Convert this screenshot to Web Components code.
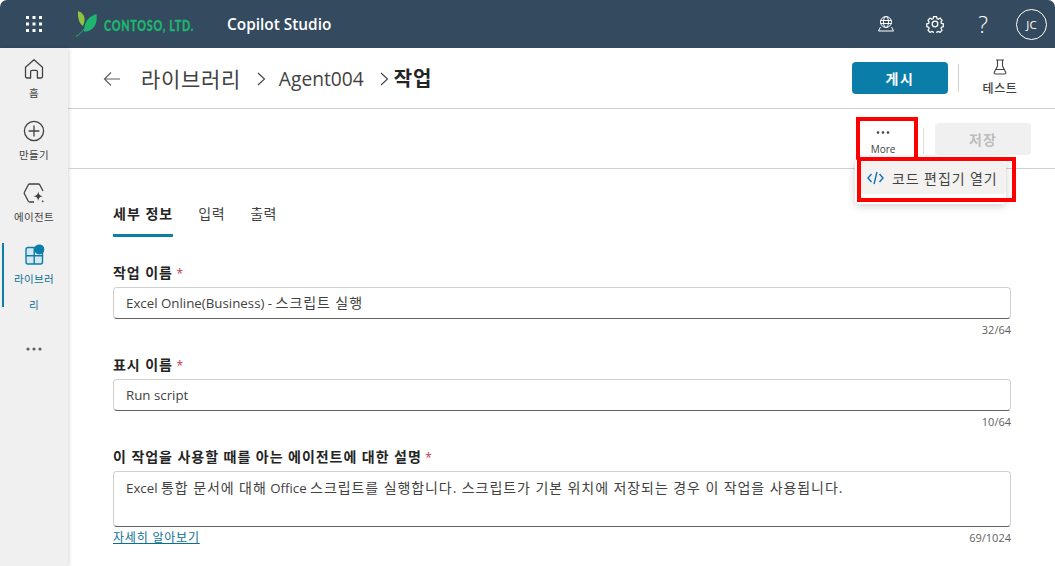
<!DOCTYPE html>
<html lang="ko">
<head>
<meta charset="utf-8">
<title>Copilot Studio</title>
<style>
  html, body { margin: 0; height: 100%; background: #fff; overflow: hidden; }
  body { font-family: "Open Sans", "Noto Sans CJK KR", sans-serif; color: #242424; }
  studio-shell { height: 566px; }
</style>
</head>
<body>
<studio-shell>
  <app-topbar slot="top"></app-topbar>
  <app-rail slot="rail">
    <rail-item icon="home" label="홈"></rail-item>
    <rail-item icon="plus" label="만들기"></rail-item>
    <rail-item icon="agent" label="에이전트"></rail-item>
    <rail-item icon="library" label="라이브러리" active></rail-item>
    <rail-item icon="more"></rail-item>
  </app-rail>
  <page-header slot="head"></page-header>
  <action-toolbar slot="head"></action-toolbar>
  <section-tabs></section-tabs>
  <form-field label="작업 이름" value="Excel Online(Business) - 스크립트 실행" count="32/64"></form-field>
  <form-field label="표시 이름" value="Run script" count="10/64"></form-field>
  <form-field label="이 작업을 사용할 때를 아는 에이전트에 대한 설명" value="Excel 통합 문서에 대해 Office 스크립트를 실행합니다. 스크립트가 기본 위치에 저장되는 경우 이 작업을 사용됩니다." count="69/1024" link="자세히 알아보기" tall></form-field>
</studio-shell>

<script>
const ICONS = {
  home: `<svg width="22" height="22" viewBox="0 0 22 22" fill="none" stroke="#424242" stroke-width="1.3"><path d="M2.500 9.200 11 1.800l8.500 7.400v9.400a1.400 1.400 0 0 1-1.400 1.400h-3.700v-6.200a1.400 1.400 0 0 0-1.400-1.400H9a1.400 1.400 0 0 0-1.400 1.400v6.200H3.900a1.400 1.400 0 0 1-1.400-1.400z" stroke-linejoin="round"/></svg>`,
  plus: `<svg width="22" height="22" viewBox="0 0 22 22" fill="none" stroke="#424242" stroke-width="1.3"><circle cx="11" cy="11" r="9.600"/><path d="M11 5.600v10.800M5.600 11h10.800"/></svg>`,
  agent: `<svg width="22" height="22" viewBox="0 0 22 22" fill="none"><path d="M11 20H6.700a1.600 1.600 0 0 1-1.400-.8L1.400 11.800a1.600 1.600 0 0 1 0-1.600L5.300 2.800A1.600 1.600 0 0 1 6.700 2h8.600a1.600 1.600 0 0 1 1.400.8L20 9" stroke="#424242" stroke-width="1.300"/><path d="M15.300 9.500c.5 3.200 1.500 4.200 4.700 4.800-3.200.5-4.200 1.500-4.700 4.700-.6-3.200-1.600-4.200-4.800-4.700 3.200-.6 4.200-1.600 4.800-4.800zM19.700 17.800c.2 1 .5 1.300 1.500 1.500-1 .2-1.300.5-1.500 1.500-.2-1-.5-1.300-1.500-1.500 1-.2 1.300-.5 1.500-1.500z" fill="#424242"/></svg>`,
  library: `<svg width="22" height="22" viewBox="0 0 22 22" fill="none"><rect x="3" y="3.500" width="16.500" height="16.500" rx="2" fill="#d5e8f1" stroke="#0a7ea8" stroke-width="1.400"/><path d="M11.200 3.500V20M3 11.700h16.500" stroke="#0a7ea8" stroke-width="1.400"/><circle cx="16.300" cy="5.400" r="5" fill="#0a7ea8"/></svg>`
};

// Hangul runs get their own span, the Latin around them stays at the base size
const hangul = text => text.replace(/[\uAC00-\uD7A3]+(?:[ .]+[\uAC00-\uD7A3]+)*\.?/g, m => `<span class="ko">${m}</span>`);

class StudioShell extends HTMLElement {
  constructor() {
    super();
    this.attachShadow({ mode: "open" });
    this.shadowRoot.innerHTML = `
      <style>
        :host { display: grid; grid-template: 48px 1fr / 68px 1fr; }
        .top { grid-column: 1 / 3; }
        main { display: flex; flex-direction: column; min-width: 0; overflow: hidden; }
        .body { display: flex; flex-direction: column; padding: 32px 44px 0 45px; }
      </style>
      <div class="top"><slot name="top"></slot></div>
      <slot name="rail"></slot>
      <main>
        <slot name="head"></slot>
        <div class="body"><slot></slot></div>
      </main>`;
  }
}

class AppTopbar extends HTMLElement {
  constructor() {
    super();
    this.attachShadow({ mode: "open" });
    const dots = [0, 1, 2].flatMap(r => [0, 1, 2].map(c =>
      `<rect x="${c * 6.5}" y="${r * 6.5}" width="3" height="3" fill="#fff"/>`)).join("");
    this.shadowRoot.innerHTML = `
      <style>
        :host { display: flex; align-items: center; height: 48px; background: #344a5e; color: #fff; border-radius: 7px 7px 0 0; }
        .waffle { display: flex; margin-left: 26px; width: 50px; }
        .logo { display: flex; align-items: center; gap: 6px; width: 151px; }
        .brand { font: 900 15px "Lato", sans-serif; color: #1fb56f; letter-spacing: 1px; -webkit-text-stroke: .3px #1fb56f; transform: scaleX(.72); transform-origin: left; white-space: nowrap; width: 91px; margin-top: 1px; }
        .name { font: 600 15.400px "Open Sans", sans-serif; }
        .tools { margin-left: auto; display: flex; align-items: center; }
        .tools svg { display: block; margin-top: -1px; }
        .tool { width: 50px; display: flex; justify-content: center; }
        .gear { padding-right: 2px; box-sizing: border-box; }
        .help { font: 300 23px "Open Sans", sans-serif; line-height: 24px; margin-left: -3px; margin-right: 1px; }
        .avatar { width: 29px; height: 29px; margin: 0 8px 0 7px; border: 1px solid #fff; border-radius: 50%; display: grid; place-items: center; font-size: 11.500px; }
      </style>
      <div class="waffle"><svg width="16" height="16">${dots}</svg></div>
      <div class="logo">
        <svg width="22" height="26" viewBox="0 0 22 26">
          <path d="M0 25.500C3 24 6 21 8 18" stroke="#1fb56f" stroke-width="1" fill="none"/>
          <path d="M2 0c4 1.500 6 4 6.500 7 .3 2.500-.3 5-1.500 8C3.500 12.500 1.500 8 2 0z" fill="#8cc63f"/>
          <path d="M20.500 3c.8 6.500-.5 11-4 14.500-2.500 2.500-5.500 3-8.500 3 0-6 1.500-10 4.500-13 2-2 5-3.500 8-4.500z" fill="#1fb56f"/>
        </svg>
        <span class="brand">CONTOSO, LTD.</span>
      </div>
      <span class="name">Copilot Studio</span>
      <div class="tools">
        <div class="tool"><svg width="18" height="18" viewBox="0 0 18 18" fill="none" stroke="#fff" stroke-width="1"><circle cx="9" cy="7" r="5.500"/><ellipse cx="9" cy="7" rx="2.500" ry="5.500"/><path d="M3.500 5.500h11M3.500 8.500h11M3.500 12 1.500 16h15L14.500 12"/></svg></div>
        <div class="tool gear"><svg width="18" height="18" viewBox="0 0 18 18" fill="none" stroke="#fff" stroke-width="1.300"><circle cx="9" cy="9" r="2.800"/><path d="M7.400 1.300h3.200l.4 2.200 1.300.6 2-1.100 2.100 2.300-1.200 1.800.5 1.400 2 .5v3l-2 .5-.5 1.400 1.200 1.800-2.100 2.300-2-1.100-1.300.6-.4 2.200H7.400l-.4-2.200-1.300-.6-2 1.100-2.100-2.300 1.200-1.800-.5-1.400-2-.5v-3l2-.5.5-1.400-1.200-1.800 2.100-2.300 2 1.100 1.300-.6z" transform="translate(.5 .3) scale(.95)"/></svg></div>
        <div class="tool help">?</div>
        <div class="avatar">JC</div>
      </div>`;
  }
}

class AppRail extends HTMLElement {
  constructor() {
    super();
    this.attachShadow({ mode: "open" });
    this.shadowRoot.innerHTML = `
      <style>
        :host { display: flex; flex-direction: column; gap: 14px; height: 518px; padding-top: 10px; box-sizing: border-box; background: #f0f0f0; box-shadow: 1px 0 4px rgba(0,0,0,.16); position: relative; }
      </style>
      <slot></slot>`;
  }
}

class RailItem extends HTMLElement {
  constructor() {
    super();
    this.attachShadow({ mode: "open" });
  }
  connectedCallback() {
    const icon = this.getAttribute("icon");
    const label = this.getAttribute("label");
    const body = icon === "more"
      ? `<svg width="16" height="4"><circle cx="2" cy="2" r="1.600" fill="#616161"/><circle cx="8" cy="2" r="1.600" fill="#616161"/><circle cx="14" cy="2" r="1.600" fill="#616161"/></svg>`
      : `${ICONS[icon]}<span>${label}</span>`;
    this.shadowRoot.innerHTML = `
      <style>
        :host { display: block; position: relative; }
        :host([icon="more"]) { padding-top: 15px; }
        .item { display: flex; flex-direction: column; align-items: center; text-align: center; }
        svg { display: block; }
        span { font-size: 10.500px; letter-spacing: .4px; line-height: 26px; width: 46px; color: #424242; word-break: break-all; }
        :host([active]) span { color: #0a6f95; }
        :host([active])::before { content: ""; position: absolute; left: 2px; top: -1px; height: 64px; width: 2px; background: #0a7ea8; }
      </style>
      <div class="item">${body}</div>`;
  }
}

class PageHeader extends HTMLElement {
  constructor() {
    super();
    this.attachShadow({ mode: "open" });
    const chev = `<svg width="9" height="14" viewBox="0 0 9 14" fill="none" stroke="#424242" stroke-width="1.100"><path d="m1 1 6.500 6L1 13"/></svg>`;
    this.shadowRoot.innerHTML = `
      <style>
        :host { display: flex; flex: none; align-items: center; height: 60px; padding: 0 24px 0 35px; border-bottom: 1px solid #d1d1d1; }
        .crumbs { display: flex; align-items: center; font-size: 19.200px; color: #424242; line-height: 26px; margin-top: 2px; }
        .ko { font-size: 21px; letter-spacing: .65px; }
        svg { display: block; }
        .back { margin-right: 20px; }
        .sep { margin: 0 13px 0 16px; }
        .sep.b { margin: 0 5px 0 16px; }
        b { font-weight: 700; color: #242424; font-size: 20px; letter-spacing: 1px; }
        .publish { margin-left: auto; width: 96px; height: 32px; border-radius: 4px; background: #0a7ea8; color: #fff; font-size: 14px; font-weight: 700; letter-spacing: 1.500px; display: grid; place-items: center; }
        .divider { width: 1px; height: 28px; background: #d1d1d1; margin: 0 10px; }
        .test { width: 62px; display: flex; flex-direction: column; align-items: center; gap: 4px; font-size: 12px; font-weight: 500; letter-spacing: .6px; color: #424242; }
      </style>
      <div class="crumbs">
        <svg class="back" width="18" height="16" viewBox="0 0 18 16" fill="none" stroke="#616161" stroke-width="1.200"><path d="M17 8H1.500M8 1.500 1.500 8 8 14.500"/></svg>
        <span class="ko">라이브러리</span>
        <span class="sep">${chev}</span>
        <span>Agent004</span>
        <span class="sep b">${chev}</span>
        <b>작업</b>
      </div>
      <div class="publish">게시</div>
      <div class="divider"></div>
      <div class="test">
        <svg width="14" height="16" viewBox="0 0 14 16" fill="none" stroke="#424242" stroke-width="1.100"><path d="M3 1h8M4.500 1v6L1.300 13.300A1.200 1.200 0 0 0 2.400 15h9.200a1.200 1.200 0 0 0 1.100-1.700L9.500 7V1M3.200 10.500h7.600"/></svg>
        <span>테스트</span>
      </div>`;
  }
}

class ActionToolbar extends HTMLElement {
  constructor() {
    super();
    this.attachShadow({ mode: "open" });
    this.shadowRoot.innerHTML = `
      <style>
        :host { display: flex; flex: none; align-items: center; justify-content: flex-end; height: 59px; padding-right: 24px; border-bottom: 1px solid #d1d1d1; position: relative; }
        .more { width: 54px; box-sizing: border-box; padding-right: 2px; display: flex; flex-direction: column; align-items: center; gap: 8px; font-size: 10px; line-height: 14px; color: #424242; margin-top: 9px; }
        .more svg { display: block; }
        .divider { width: 1px; height: 26px; background: #e0e0e0; margin: 4px 11px 0 12px; }
        .save { width: 96px; height: 32px; border-radius: 4px; background: #f0f0f0; color: #bdbdbd; font-size: 14px; font-weight: 700; letter-spacing: 1.200px; display: grid; place-items: center; margin-top: 1px; }
        .mark { position: absolute; border: 4px solid #f00; box-sizing: border-box; }
        .mark.a { left: 788px; top: 8px; width: 62px; height: 44px; }
        .menu { position: absolute; left: 787px; top: 50px; width: 151px; height: 45px; background: #fff; border-radius: 4px; box-shadow: 0 2px 8px rgba(0,0,0,.2); box-sizing: border-box; padding: 3px 0 0 5px; z-index: 2; }
        .entry { display: flex; align-items: center; gap: 8px; height: 32px; background: #f3f2f1; border-radius: 4px; padding-left: 7px; font-size: 14px; color: #424242; white-space: nowrap; letter-spacing: .9px; }
        .entry svg { flex: none; }
        .mark.b { left: 789px; top: 48px; width: 159px; height: 45px; z-index: 3; }
      </style>
      <div class="more">
        <svg width="14" height="3"><circle cx="2" cy="1.500" r="1.300" fill="#424242"/><circle cx="7" cy="1.500" r="1.300" fill="#424242"/><circle cx="12" cy="1.500" r="1.300" fill="#424242"/></svg>
        <span>More</span>
      </div>
      <div class="divider"></div>
      <div class="save">저장</div>
      <div class="menu">
        <div class="entry">
          <svg width="17" height="14" viewBox="0 0 17 14" fill="none" stroke="#1170b5" stroke-width="1.400"><path d="M4.500 3 1 7l3.500 4M12.500 3 16 7l-3.500 4M10 1 7 13"/></svg>
          <span>코드 편집기 열기</span>
        </div>
      </div>
      <div class="mark a"></div>
      <div class="mark b"></div>`;
  }
}

class SectionTabs extends HTMLElement {
  constructor() {
    super();
    this.attachShadow({ mode: "open" });
    this.shadowRoot.innerHTML = `
      <style>
        :host { display: flex; gap: 25px; height: 36px; margin-bottom: 26px; font-size: 14px; letter-spacing: .6px; color: #424242; }
        div { line-height: 26px; }
        .on { font-weight: 700; letter-spacing: 1px; color: #242424; height: 33px; border-bottom: 3px solid #0a7ea8; border-radius: 0 0 1px 1px; }
      </style>
      <div class="on">세부 정보</div>
      <div>입력</div>
      <div>출력</div>`;
  }
}

class FormField extends HTMLElement {
  constructor() {
    super();
    this.attachShadow({ mode: "open" });
  }
  connectedCallback() {
    const link = this.getAttribute("link");
    this.shadowRoot.innerHTML = `
      <style>
        :host { display: block; margin-bottom: 16px; }
        label { display: block; height: 19px; font-size: 14px; font-weight: 700; letter-spacing: .95px; line-height: 19px; margin-bottom: 5px; color: #242424; white-space: nowrap; }
        i { color: #c4314b; font-style: normal; font-weight: 400; font-size: 12px; letter-spacing: 0; margin-left: -1px; }
        .box { height: 32px; box-sizing: border-box; border: 1px solid #d1d1d1; border-bottom-color: #616161; border-radius: 4px; padding: 0 12px; font-size: 13.300px; line-height: 30px; color: #424242; white-space: nowrap; }
        .ko { font-size: 14px; letter-spacing: .92px; }
        :host([tall]) .box { height: 56px; padding-top: 1px; }
        .foot { display: flex; justify-content: space-between; align-items: center; height: 20px; font-size: 11px; color: #616161; }
        .foot span { margin-left: auto; }
        a { font-size: 12px; letter-spacing: .8px; color: #0a6f95; text-decoration: underline; }
      </style>
      <label>${this.getAttribute("label")} <i>*</i></label>
      <div class="box">${hangul(this.getAttribute("value"))}</div>
      <div class="foot">${link ? `<a>${link}</a>` : ""}<span>${this.getAttribute("count")}</span></div>`;
  }
}

customElements.define("app-topbar", AppTopbar);
customElements.define("app-rail", AppRail);
customElements.define("rail-item", RailItem);
customElements.define("page-header", PageHeader);
customElements.define("action-toolbar", ActionToolbar);
customElements.define("section-tabs", SectionTabs);
customElements.define("form-field", FormField);
customElements.define("studio-shell", StudioShell);
</script>
</body>
</html>
